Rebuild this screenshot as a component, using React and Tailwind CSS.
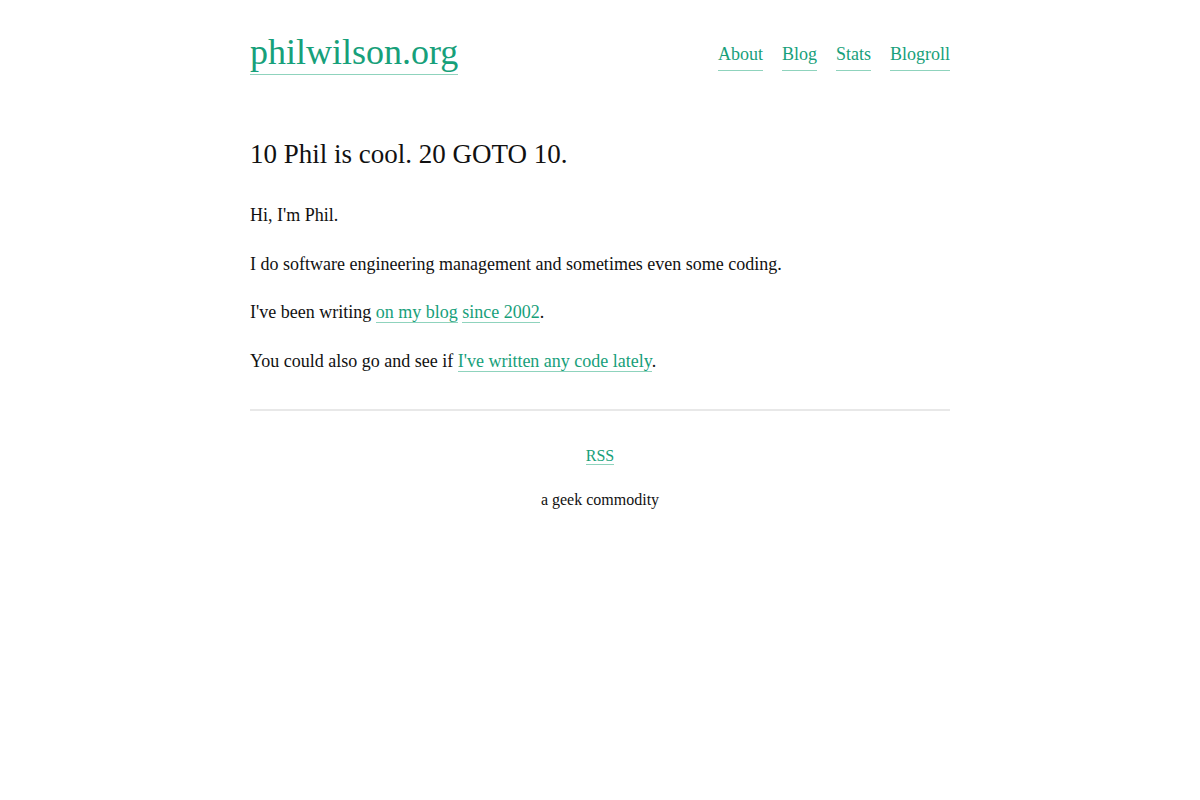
export default function App() {
  const link = "text-[#17a07a] border-b border-[#8fd3bd] no-underline";
  return (
    <div className="min-h-[800px] bg-white text-[#111] font-['Liberation_Serif',serif]">
      <div className="mx-auto w-[700px]">
        <header className="flex items-start justify-between pt-[30px]">
          <a href="#" className="text-[36px] leading-[44px] text-[#17a07a] border-b border-[#8fd3bd]">
            philwilson.org
          </a>
          <nav className="mt-[11px] flex gap-[19px] text-[18px] leading-[26px]">
            <a href="#" className={`${link} pb-[3px]`}>About</a>
            <a href="#" className={`${link} pb-[3px]`}>Blog</a>
            <a href="#" className={`${link} pb-[3px]`}>Stats</a>
            <a href="#" className={`${link} pb-[3px]`}>Blogroll</a>
          </nav>
        </header>
        <main className="pt-[61px]">
          <h1 className="text-[27px] leading-[36px] font-normal">10 Phil is cool. 20 GOTO 10.</h1>
          <div className="mt-[30px] text-[18px] leading-[27px] flex flex-col gap-[21.5px]">
            <p>Hi, I'm Phil.</p>
            <p>I do software engineering management and sometimes even some coding.</p>
            <p>
              I've been writing <a href="#" className={link}>on my blog</a>{" "}
              <a href="#" className={link}>since 2002</a>.
            </p>
            <p>
              You could also go and see if <a href="#" className={link}>I've written any code lately</a>.
            </p>
          </div>
        </main>
        <footer className="mt-[34px] border-t-2 border-[#e8e8e8] pt-[33px] text-center text-[16px] leading-[24px]">
          <p>
            <a href="#" className={link}>RSS</a>
          </p>
          <p className="mt-[20px]">a geek commodity</p>
        </footer>
      </div>
    </div>
  );
}
